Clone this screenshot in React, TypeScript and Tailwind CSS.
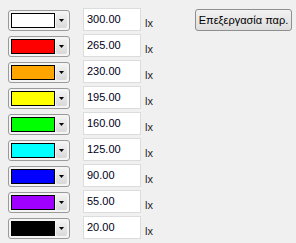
const rows = [
  { color: '#ffffff', value: '300.00' },
  { color: '#ff0000', value: '265.00' },
  { color: '#ffa500', value: '230.00' },
  { color: '#ffff00', value: '195.00' },
  { color: '#00ff00', value: '160.00' },
  { color: '#00ffff', value: '125.00' },
  { color: '#0000ff', value: '90.00' },
  { color: '#a000ff', value: '55.00' },
  { color: '#000000', value: '20.00' },
];

function ColorCombo({ color }: { color: string }) {
  return (
    <div className="flex h-[21px] w-[62px] rounded-[3px] border border-[#9a9a9a] bg-[#f4f4f4] p-[2px]">
      <div className="flex-1 border border-black" style={{ backgroundColor: color }} />
      <div className="ml-[1px] flex w-[11px] items-center justify-center rounded-[2px] bg-gradient-to-b from-[#f2f2f2] to-[#d8d8d8]">
        <svg width="5" height="3" viewBox="0 0 5 3">
          <path d="M0 0h5L2.5 3z" fill="#000" />
        </svg>
      </div>
    </div>
  );
}

export default function App() {
  return (
    <div className="relative h-[243px] w-[296px] bg-[#f0f0f0] font-['Liberation_Sans',sans-serif] text-[11px] text-black">
      <div className="flex flex-col pl-[8px] pt-[8px]">
        {rows.map((r) => (
          <div key={r.value} className="flex h-[26px] items-start">
            <div className="mt-[2px]">
              <ColorCombo color={r.color} />
            </div>
            <div className="ml-[13px] flex h-[23px] w-[58px] items-center border border-[#dcdcdc] bg-white pl-[3px] text-[#000020]">
              {r.value}
            </div>
            <span className="ml-[4px] mt-[7px] text-[#222]">lx</span>
          </div>
        ))}
      </div>
      <button className="absolute left-[195px] top-[9px] flex h-[22px] w-[97px] items-center justify-center rounded-[3px] border border-[#8f8f8f] bg-gradient-to-b from-[#f2f2f2] to-[#dedede] text-[11px]">
        Επεξεργασία παρ.
      </button>
    </div>
  );
}
